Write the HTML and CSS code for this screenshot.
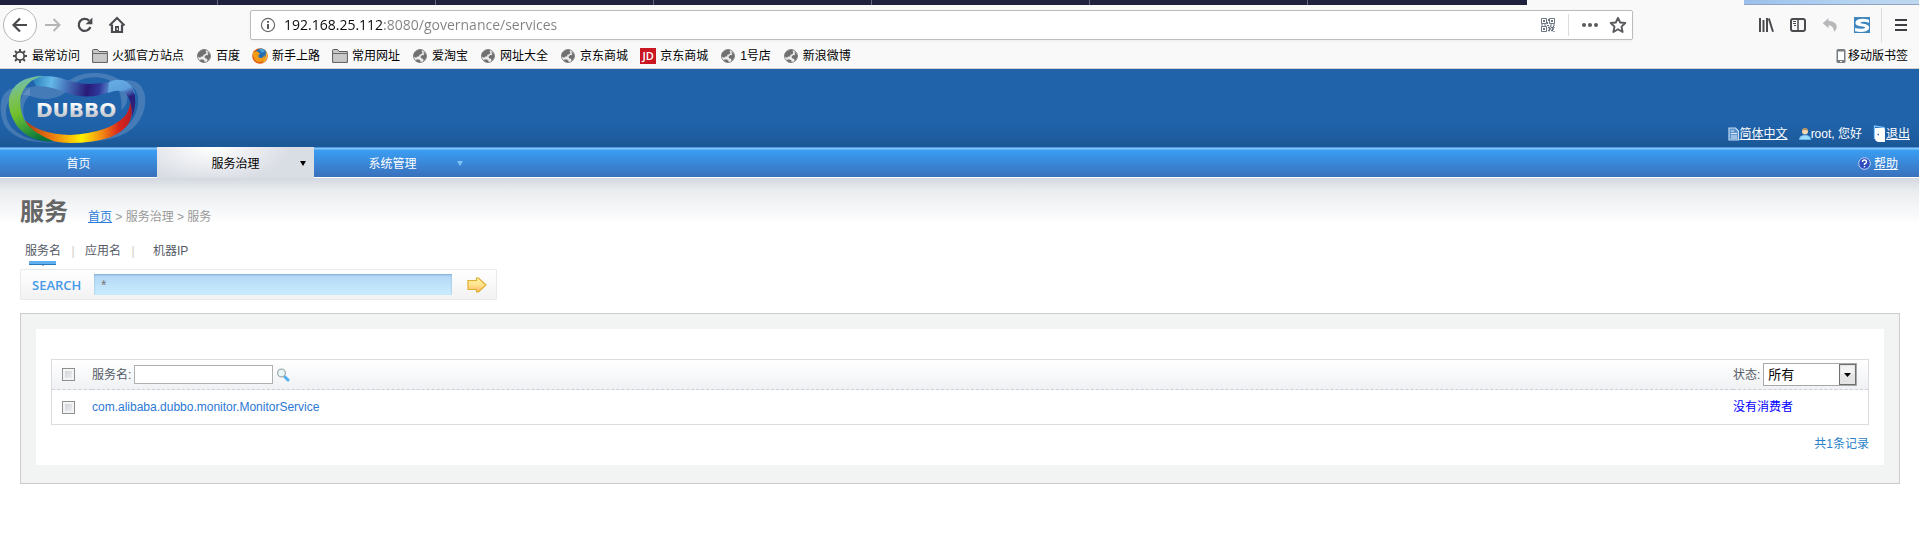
FILE: index.html
```html
<!DOCTYPE html>
<html lang="zh-CN">
<head>
<meta charset="utf-8">
<title>Dubbo 服务治理</title>
<link rel="stylesheet" href="styles.css">
</head>
<body>
<svg class="defs" aria-hidden="true">
  <symbol id="globe" viewBox="0 0 16 16"><circle cx="8" cy="8" r="6.500" fill="#ececec" stroke="#858585"/><path d="M1.500 8 2.200 5 5 2.400 8.500 1.500 10.500 2.500 9.500 3.500 10.500 4.500 9.300 6.300 7.500 6.800 7 8.500 5.200 8.600 4.200 9.800 2.800 9.300ZM11.600 3.600 13.500 5.500 14.400 8.500 13.200 11.500 11.500 13 11 10.800 9 10.200 8.600 8.500 10.200 7 12 7.200ZM3.400 12 6 11.200 8.300 12.200 8.600 14.400 5.500 13.900Z" fill="#707070"/></symbol>
  <symbol id="folder" viewBox="0 0 16 16"><path d="M.6 14.400V2.200Q.6 1.500 1.400 1.500H5.600L7 3.500H15.400V14.400Z" fill="#c9c9c9" stroke="#5c5c5c"/><path d="M1 5.500H15" stroke="#6c6c6c"/></symbol>
</svg>

<header class="browser">
  <div class="tabstrip"><i></i><i></i><i></i><i></i><i></i><i></i><i></i><b></b><em></em></div>
  <div class="toolbar">
    <div class="navigation">
      <button class="back" aria-label="后退"><svg width="18" height="18" viewBox="0 0 18 18"><path d="M16 9H2.500M9 2.500 2.500 9 9 15.500" fill="none" stroke="#4a4a4f" stroke-width="2.200"/></svg></button>
      <button aria-label="前进"><svg width="18" height="18" viewBox="0 0 18 18"><path d="M1 9H15.500M9.500 3 15.500 9 9.500 15" fill="none" stroke="#b5b5b7" stroke-width="2"/></svg></button>
      <button aria-label="刷新"><svg width="18" height="18" viewBox="0 0 18 18"><path d="M14.400 11A6 6 0 1 1 13 4.600" fill="none" stroke="#4a4a4f" stroke-width="2.300"/><path d="M16.400 1.500V8.300H9.600Z" fill="#4a4a4f"/></svg></button>
      <button aria-label="主页"><svg width="18" height="18" viewBox="0 0 18 18"><path d="M1.500 9.500 9 2 16.500 9.500" fill="none" stroke="#4a4a4f" stroke-width="2"/><path d="M4 8.500V16H14V8.500" fill="none" stroke="#4a4a4f" stroke-width="2.200"/><path d="M7 16V10H11V16Z" fill="#4a4a4f"/><path d="M8.700 12H9.800V14H8.700Z" fill="#fff"/></svg></button>
    </div>
    <div class="address">
      <svg width="16" height="16" viewBox="0 0 16 16"><circle cx="8" cy="8" r="6.600" fill="none" stroke="#6a6a6d" stroke-width="1.200"/><path d="M7 7H9V12H7ZM7 4H9V5.800H7Z" fill="#5a5a5d"/></svg>
      <input class="url" type="text" aria-label="地址" value="192.168.25.112:8080/governance/services">
      <button aria-label="二维码"><svg width="14" height="14" viewBox="0 0 14 14"><g fill="none" stroke="#6b7683"><path d="M.5.5H5.500V5.500H.5ZM8.500.5H13.500V5.500H8.500ZM.5 8.500H5.500V13.500H.5Z"/><path d="M2 3H4M10 3H12M2 11H4" stroke-width="2"/><path d="M7.500 1V3M6.500 4V6M0 7H2M3 7H5M6 7.500H8M9 7H11M12 7H14" stroke-width="1.200"/><path d="M7 9.500H9M10 9.500H12M8 11H10M11 11H13M7 12.500H9M10 12.500H12M13 9V10M13 13V14M9 8.500H10M12 8.500H13" stroke-width="1.300"/></g></svg></button>
      <span class="rule"></span>
      <button class="more" aria-label="更多"><svg width="18" height="16" viewBox="0 0 18 16"><g fill="#5a5a5e"><circle cx="3" cy="8" r="2"/><circle cx="9" cy="8" r="2"/><circle cx="15" cy="8" r="2"/></g></svg></button>
      <button aria-label="收藏"><svg width="18" height="18" viewBox="0 0 18 18"><path d="M9 1.800 11.200 6.500 16.300 7 12.500 10.600 13.600 16 9 13.300 4.400 16 5.500 10.600 1.700 7 6.800 6.500Z" fill="none" stroke="#5a5a5e" stroke-width="1.900" stroke-linejoin="round"/></svg></button>
    </div>
    <div class="tools">
      <button aria-label="书库"><svg width="16" height="16" viewBox="0 0 16 16"><path d="M2 1V15M5.500 3V15M9 1V15M10.800 1.500 15 14.700" fill="none" stroke="#4a4a4f" stroke-width="2"/></svg></button>
      <button aria-label="侧栏"><svg width="16" height="16" viewBox="0 0 16 16"><rect x="1" y="2" width="14" height="12" rx="2" fill="none" stroke="#4a4a4f" stroke-width="2"/><path d="M8 2V14" stroke="#4a4a4f" stroke-width="1.500"/><path d="M3 4.500H6M3 6.500H6M4 8.500H6" stroke="#4a4a4f"/></svg></button>
      <button aria-label="撤销"><svg width="16" height="16" viewBox="0 0 16 16"><path d="M6.500 1 .8 6.200 6.500 11.300V8.300Q11.500 8.300 12 14.800 15.500 12 14.600 8.500 13 4.200 6.500 4Z" fill="#b6b8ba"/></svg></button>
      <button aria-label="搜狗"><svg width="16" height="16" viewBox="0 0 16 16"><path d="M0 0H16V16H0Z" fill="#3f86bd"/><path d="M15 2.800Q9 .8 4.500 2.300 0 4.500 2 7.500 3.500 9 9 9.500 12.500 10.300 10 11.500 6 12.300 1 11V14.200Q7 15.800 12 14.300 16.500 12 14.500 8.800 12.500 7 8 6.500 5 6 7.500 5 11 4.500 15 5.800Z" fill="#fff"/></svg></button>
      <span class="rule tall"></span>
      <button aria-label="菜单"><svg width="14" height="16" viewBox="0 0 14 16"><path d="M1 3H13M1 8H13M1 13H13" stroke="#3d3d42" stroke-width="2"/></svg></button>
    </div>
  </div>
  <nav class="bookmarks" aria-label="书签">
    <a href="#"><svg viewBox="0 0 16 16"><circle cx="8" cy="8" r="4.200" fill="none" stroke="#4b4b4b" stroke-width="1.800"/><path d="M8 1V4M8 12V15M1 8H4M12 8H15M3 3 5 5M11 11 13 13M3 13 5 11M11 5 13 3" stroke="#4b4b4b" stroke-width="1.900"/></svg>最常访问</a>
    <a href="#"><svg><use href="#folder"/></svg>火狐官方站点</a>
    <a href="#"><svg><use href="#globe"/></svg>百度</a>
    <a href="#"><svg viewBox="0 0 16 16"><circle cx="8" cy="8" r="7.800" fill="#e45b13"/><circle cx="9" cy="6.200" r="5.800" fill="#246db4"/><path d="M7 1Q11 0 13 3L10 5Z" fill="#49a4d7"/><path d="M1 3 3 4Q5 2.500 6.500 4.200L8 5.500 6.500 7.500Q6 10 9 10 12 9.500 12 7 14 9 12 12.500 8 15 4 13 0 9 1 3Z" fill="#f39a17"/><path d="M13.500 3Q16.500 7 14.500 11 13 14 10 15 15 10 13.500 3Z" fill="#f4c12c"/></svg>新手上路</a>
    <a href="#"><svg><use href="#folder"/></svg>常用网址</a>
    <a href="#"><svg><use href="#globe"/></svg>爱淘宝</a>
    <a href="#"><svg><use href="#globe"/></svg>网址大全</a>
    <a href="#"><svg><use href="#globe"/></svg>京东商城</a>
    <a href="#"><span class="jd">JD</span>京东商城</a>
    <a href="#"><svg><use href="#globe"/></svg>1号店</a>
    <a href="#"><svg><use href="#globe"/></svg>新浪微博</a>
    <a class="mobile" href="#"><svg viewBox="0 0 10 16"><rect x=".5" y="1" width="9" height="14" rx="1.500" fill="#777d82"/><path d="M2 3.500H8V12H2Z" fill="#fff"/><path d="M4 13.500H6" stroke="#fff"/></svg>移动版书签</a>
  </nav>
</header>

<div class="banner">
  <svg class="logo" width="146" height="74" viewBox="0 0 146 74" role="img" aria-label="DUBBO">
    <defs>
      <linearGradient id="left" x1=".3" y1="0" x2=".6" y2="1"><stop offset="0" stop-color="#6fbcc0"/><stop offset=".25" stop-color="#7bc262"/><stop offset=".5" stop-color="#73c02d"/><stop offset=".75" stop-color="#3c9f38"/><stop offset="1" stop-color="#077437"/></linearGradient>
      <linearGradient id="top" gradientUnits="userSpaceOnUse" x1="30" y1="8" x2="126" y2="24"><stop offset="0" stop-color="#1c75b4"/><stop offset=".22" stop-color="#65b9e8"/><stop offset=".42" stop-color="#3f63b0"/><stop offset=".6" stop-color="#281b78"/><stop offset=".72" stop-color="#30399a"/><stop offset=".87" stop-color="#68b0e4"/><stop offset="1" stop-color="#5da4de"/></linearGradient>
      <linearGradient id="right" x1="0" y1="0" x2=".3" y2="1"><stop offset="0" stop-color="#68b0e4"/><stop offset=".4" stop-color="#5d9fdc"/><stop offset=".65" stop-color="#28207c"/><stop offset="1" stop-color="#332278"/></linearGradient>
      <linearGradient id="bottom"><stop offset="0" stop-color="#a63a1c"/><stop offset=".25" stop-color="#ef780e"/><stop offset=".53" stop-color="#fff000"/><stop offset=".72" stop-color="#f28a13"/><stop offset=".88" stop-color="#d9261c"/><stop offset="1" stop-color="#b71b24"/></linearGradient>
      <linearGradient id="silver" x1="0" y1="0" x2="0" y2="1"><stop offset=".2" stop-color="#fff"/><stop offset=".8" stop-color="#bfc3c9"/></linearGradient>
    </defs>
    <g fill="#a9bfdc" fill-opacity=".27" fill-rule="evenodd">
      <path d="M20 17C0 15-3 36 4 53 13 70 37 73 62 71 30 73 7 61 6 43 5 29 14 23 27 24 50 33 63 25 69 18 77 7 92 4 106 8 119 13 123 26 121 39 129 34 130 20 121 10 107-1 82 0 70 9 48 10 36 17 20 17Z"/>
      <path d="M122 10C146 4 151 32 139 50 126 70 93 72 68 71 98 72 127 60 134 46 142 31 139 13 124 14Z"/>
      <path d="M30 24C20 33 22 48 30 55L25 53C15 41 18 25 30 17Z"/>
    </g>
    <path d="M32 7Q37 4 43 5 57 5 67 9 78 13 90 13 106 12 122 9 131 11 135 22L127 24Q123 18 117 19 111 20 100 24 83 28 67 22 48 14 36 15Z" fill="url(#top)"/>
    <path d="M109 11Q125 4 133 18 138 31 132 46 132 29 126 23 121 17 108 22Z" fill="url(#right)"/>
    <path d="M25 49Q39 63 70 64 109 62 125 45 130 38 130 31 134 42 129 52 124 60 111 66 93 72 70 72 34 71 25 49Z" fill="url(#bottom)"/>
    <path d="M43 5Q30 8 24 18 17 29 23 46 27 59 53 70 31 72 17 55 7 40 9 27 14 6 43 5Z" fill="url(#left)"/>
    <text x="36" y="46" class="wordmark" fill="url(#silver)">DUBBO</text>
  </svg>
  <div class="account">
    <a href="#"><svg width="12" height="14" viewBox="0 0 12 14"><path d="M1 1H7.500L10.500 4V13H1Z" fill="#5d93cc" stroke="#c2daf2" stroke-width="1.200"/><path d="M3 4H6M3 6.500H9M3 9H9M3 11H9" stroke="#e0eefb"/></svg><span>简体中文</span></a>
    <div class="user"><svg width="12" height="14" viewBox="0 0 12 14"><path d="M.5 12.500Q.5 9 4 8.500H8Q11.500 9 11.500 12.500Z" fill="#9cdcff" stroke="#6bbceb"/><circle cx="6" cy="4.500" r="3" fill="#f2d7b4"/><path d="M3 4Q3 1 6 1T9 4Q6 2 3 4Z" fill="#b89561"/></svg><span>root, 您好</span></div>
    <a href="#"><svg width="13" height="18" viewBox="0 0 13 18"><path d="M1.500 14V1L11 2.500V4" fill="none" stroke="#80c5ff" stroke-width="1.300"/><path d="M2 3H11Q12 3 12 5V17H5Q2 16 2 14Z" fill="#fff"/><path d="M4.500 9.500H6" stroke="#276eb4" stroke-width="1.500"/></svg><span>退出</span></a>
  </div>
</div>
<nav class="menu">
  <a href="#">首页</a>
  <a class="active" href="#">服务治理<i></i></a>
  <a href="#">系统管理<i></i></a>
  <a class="help" href="#"><svg width="13" height="13" viewBox="0 0 13 13"><circle cx="6.500" cy="6.500" r="5.800" fill="#304bc0" stroke="#c3d4f4"/><path d="M4.500 5Q4.500 3 6.500 3T8.500 5Q8.500 6.200 6.500 7V8M6.500 9V10.300" fill="none" stroke="#fff" stroke-width="1.400"/></svg><span>帮助</span></a>
</nav>

<main class="page">
  <div class="heading">
    <h1>服务</h1>
    <p class="crumbs"><a href="#">首页</a> &gt; 服务治理 &gt; 服务</p>
  </div>
  <nav class="modes"><a class="current" href="#">服务名</a><span>|</span><a href="#">应用名</a><span>|</span><a class="machine" href="#">机器IP</a></nav>
  <form class="search">
    <label for="keyword">SEARCH</label>
    <input id="keyword" type="text" value="*">
    <button type="button" aria-label="搜索"><svg width="20" height="16" viewBox="0 0 20 16"><defs><linearGradient id="gold" x1="0" y1="0" x2="0" y2="1"><stop offset="0" stop-color="#fff6a5"/><stop offset=".5" stop-color="#ffe28c"/><stop offset="1" stop-color="#ffb765"/></linearGradient></defs><path d="M1 3.500H9.500V1H11.500L19 8 11.500 15H9.500V12.500H1Z" fill="url(#gold)" stroke="#dcae31" stroke-width="1.200"/></svg></button>
  </form>
  <section class="frame">
    <div class="sheet">
      <table>
        <thead><tr>
          <th class="pick"><input type="checkbox" aria-label="全选"></th>
          <th><div class="filter"><label for="name">服务名:</label><input id="name" type="text"><svg width="14" height="14" viewBox="0 0 14 14"><path d="M8 8 12 12" stroke="#4eb0ef" stroke-width="3" stroke-linecap="round"/><circle cx="5.500" cy="5" r="3.900" fill="#e8f7f5" stroke="#a2aeb2" stroke-width="1.300"/></svg></div></th>
          <th class="state"><div class="filter"><label for="state">状态:</label><select id="state"><option>所有</option></select></div></th>
        </tr></thead>
        <tbody><tr>
          <td class="pick"><input type="checkbox" aria-label="选择 MonitorService"></td>
          <td><a href="#">com.alibaba.dubbo.monitor.MonitorService</a></td>
          <td class="state none">没有消费者</td>
        </tr></tbody>
      </table>
      <p class="total">共1条记录</p>
    </div>
  </section>
</main>
</body>
</html>
```
FILE: styles.css
```css
* { box-sizing: border-box; }
body {
  margin: 0;
  background: #fff;
  color: #666;
  font: 12px/16px "Liberation Sans", "Noto Sans CJK SC", sans-serif;
}
button { display: flex; padding: 0; border: 0; background: none; }
svg { flex: none; display: block; }
h1, p { margin: 0; }
.defs { position: absolute; width: 0; height: 0; }

/* browser chrome */
.browser { background: #f9f9fa; border-bottom: 1px solid #d4d1cd; color: #000; }
.tabstrip { display: flex; height: 5px; background: #f9f9fa; }
.tabstrip i { width: 218px; background: #20203f; border-right: 1px solid #66667c; }
.tabstrip i:nth-child(7) { width: 219px; border: 0; }
.tabstrip b { width: 217px; }
.tabstrip em { flex: 1; background: linear-gradient(90deg, #9cc0ec, #b4d3f0 60%, #bfd7ef); border-bottom: 1px solid #8ea4c0; }
.toolbar { display: flex; align-items: center; height: 40px; padding: 0 11px 0 3px; }
.navigation { display: flex; align-items: center; gap: 14px; width: 247px; }
.navigation .back { width: 34px; height: 34px; align-items: center; justify-content: center; border: 1px solid #b5b5b7; border-radius: 50%; background: #fff; }
.navigation .back + button { margin-left: -7px; }
.address { flex: 1; display: flex; align-items: center; height: 30px; padding: 0 5px 0 9px; border: 1px solid #bcbcbc; border-radius: 2px; background: #fff; box-shadow: 0 1px 3px #0000000d; }
.url {
  flex: 1;
  min-width: 0;
  margin: 0 8px;
  padding: 0;
  border: 0;
  outline: 0;
  font: 14px/24px "Open Sans", sans-serif;
  color: #818181;
  background: linear-gradient(90deg, #0c0c0d 100px, #818181 100px);
  -webkit-background-clip: text;
  background-clip: text;
  -webkit-text-fill-color: transparent;
}
.rule { width: 1px; height: 22px; margin: 0 12px 0 13px; background: #dcdcdc; }
.rule.tall { height: 34px; margin: 0 -4px 0 -5px; }
.address .more { margin-right: 10px; }
.tools { display: flex; align-items: center; gap: 16px; padding-left: 125px; }
.bookmarks { display: flex; align-items: center; gap: 12px; height: 23px; padding: 0 11px 1px 12px; }
.bookmarks a { display: flex; align-items: center; gap: 4px; color: #000; text-decoration: none; white-space: nowrap; }
.bookmarks svg { width: 16px; height: 16px; }
.bookmarks .mobile { margin-left: auto; gap: 2px; }
.bookmarks .mobile svg { width: 10px; }
.jd { width: 16px; height: 16px; background: #c81623; color: #fff; font: 600 11px/16px "Open Sans", sans-serif; text-align: center; }

/* site header */
.banner { display: flex; justify-content: space-between; align-items: flex-end; height: 78px; padding: 0 9px 2px 0; background: linear-gradient(#2063ab 70%, #1b5796); }
.wordmark { font: bold 20px "DejaVu Sans", sans-serif; }
.account { display: flex; align-items: center; gap: 11px; padding-bottom: 2px; color: #fff; }
.account a, .account .user { display: flex; align-items: center; color: #fff; text-decoration: none; }
.account a span, .help span { text-decoration: underline; }
.menu { display: flex; height: 31px; background: linear-gradient(#4a98de 1px, #86c4f8 1px, #86c4f8 2px, #3a9ef3 3px, #3a70bb 30px, #fff 30px); }
.menu a { position: relative; display: flex; justify-content: center; align-items: center; width: 157px; padding-top: 3px; color: #fff; text-decoration: none; }
.menu .active { color: #000; background: radial-gradient(ellipse 80px 35px at 35% 0, #fff, #d9dde4); }
.menu i { position: absolute; right: 8px; top: 14px; border: 3px solid transparent; border-top: 5px solid #80c4f5; border-bottom: 0; }
.menu .active i { border-top-color: #000; }
.menu .help { width: auto; margin-left: auto; padding: 2px 21px 0 0; gap: 3px; }

/* content */
.page { padding: 16px 19px 0 20px; background: linear-gradient(#d3d8e0, #e9ecee 12px, #fff 46px); }
.heading { display: flex; align-items: center; gap: 20px; height: 36px; }
h1 { font-size: 24px; line-height: 36px; }
.crumbs { padding-top: 10px; color: #999; }
.crumbs a { color: #2a7ad8; }
.modes { display: flex; padding: 13px 5px 0; color: #d0cdc5; }
.modes a { position: relative; color: #555b66; text-decoration: none; }
.modes span { width: 24px; text-align: center; }
.modes .machine { margin-left: 8px; }
.modes .current::before { content: ""; position: absolute; left: 4px; top: 18px; width: 27px; height: 3px; background: #61b0f0; border-bottom: 1px solid #2a78b8; }
.modes .current::after { content: ""; position: absolute; left: 16px; top: 21px; border: 2px solid transparent; border-top-color: #2a78b8; border-bottom: 0; }
.search { display: flex; align-items: center; width: 477px; height: 31px; margin-top: 10px; padding: 0 9px 0 11px; border: 1px solid #e8eaec; border-radius: 1px; background: linear-gradient(#fff, #f2f2f2); }
.search label { width: 62px; color: #459ae9; font: 600 13px/20px "Open Sans", sans-serif; }
.search input { width: 358px; height: 21px; padding: 0 7px; border: 0; background: linear-gradient(#b2d6f5, #cbedff); box-shadow: inset 0 1px 2px #4c82ac80; color: #777; font: 14px/16px "Liberation Sans", sans-serif; }
.search button { margin-left: auto; }
.frame { margin-top: 13px; padding: 15px; border: 1px solid #ccc; background: #f2f4f3; }
.sheet { padding: 30px 15px 13px; margin-bottom: 3px; background: #fff; }
table { width: 100%; border: 1px solid #dcdcde; border-spacing: 0; }
th, td { padding: 0; text-align: left; font-weight: normal; }
th { height: 30px; border-bottom: 1px dashed #cdcfd4; color: #555b66; }
thead { background: linear-gradient(#fff, #f0f1f4); }
td { height: 34px; }
td a { color: #2b78d4; text-decoration: none; }
.pick { width: 40px; padding-left: 10px; }
.pick input { appearance: none; display: block; width: 13px; height: 13px; margin: 0; border: 1px solid #8e8f8f; background: linear-gradient(135deg, #c8cdd4, #f4f4f4); box-shadow: inset 0 0 0 2px #f4f4f4; }
.state { width: 135px; }
.none { color: #00f; }
.filter { display: flex; align-items: center; gap: 3px; }
.filter input { width: 139px; height: 19px; padding: 0 3px; border: 1px solid #b0b0b2; background: #fff; }
.filter select {
  appearance: none;
  width: 94px;
  height: 23px;
  padding: 0 20px 0 4px;
  border: 1px solid #a8a8aa;
  border-radius: 0;
  color: #000;
  font: 13px/18px "Liberation Sans", "Noto Sans CJK SC", sans-serif;
  background:
    url("data:image/svg+xml,%3Csvg xmlns='http://www.w3.org/2000/svg' width='17' height='21'%3E%3Crect x='.5' y='.5' width='16' height='20' fill='%23e4e4e4' stroke='%23707070'/%3E%3Cpath d='M2 2H15V10H2Z' fill='%23f3f3f3'/%3E%3Cpath d='M5 9H12L8.500 13Z' fill='%23000'/%3E%3C/svg%3E") right center no-repeat #fff;
}
.total { padding-top: 11px; color: #2a7fc8; text-align: right; }
```
